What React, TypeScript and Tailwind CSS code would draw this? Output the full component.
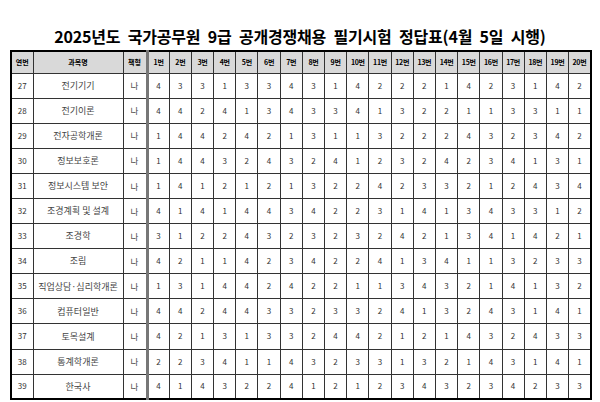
const rows: { no: number; name: string; answers: number[] }[] = [
  { no: 27, name: '전기기기', answers: [4, 3, 3, 1, 3, 3, 4, 3, 1, 4, 2, 2, 2, 1, 4, 2, 3, 1, 4, 2] },
  { no: 28, name: '전기이론', answers: [4, 4, 2, 4, 1, 3, 4, 3, 3, 4, 1, 3, 2, 2, 1, 1, 3, 3, 1, 1] },
  { no: 29, name: '전자공학개론', answers: [1, 4, 4, 2, 4, 2, 1, 3, 1, 1, 3, 2, 2, 2, 4, 3, 2, 3, 4, 2] },
  { no: 30, name: '정보보호론', answers: [1, 4, 4, 3, 2, 4, 3, 2, 4, 1, 2, 3, 2, 4, 2, 3, 4, 1, 3, 1] },
  { no: 31, name: '정보시스템 보안', answers: [1, 4, 1, 2, 1, 2, 1, 3, 2, 2, 4, 2, 3, 3, 2, 1, 2, 4, 3, 4] },
  { no: 32, name: '조경계획 및 설계', answers: [4, 1, 4, 1, 4, 4, 3, 4, 2, 2, 3, 1, 4, 1, 3, 4, 3, 3, 1, 2] },
  { no: 33, name: '조경학', answers: [3, 1, 2, 2, 4, 3, 2, 3, 2, 3, 2, 4, 2, 1, 3, 4, 1, 4, 2, 1] },
  { no: 34, name: '조림', answers: [4, 2, 1, 1, 4, 2, 3, 4, 2, 2, 4, 1, 3, 4, 1, 1, 3, 2, 3, 3] },
  { no: 35, name: '직업상담·심리학개론', answers: [1, 3, 1, 4, 4, 2, 4, 2, 2, 1, 1, 3, 4, 3, 2, 1, 4, 1, 3, 2] },
  { no: 36, name: '컴퓨터일반', answers: [4, 4, 2, 4, 4, 3, 3, 2, 3, 3, 2, 4, 1, 3, 2, 4, 3, 1, 4, 1] },
  { no: 37, name: '토목설계', answers: [4, 2, 1, 3, 1, 3, 3, 2, 4, 4, 2, 1, 2, 1, 4, 3, 2, 4, 3, 3] },
  { no: 38, name: '통계학개론', answers: [2, 2, 3, 4, 1, 1, 4, 3, 2, 3, 3, 1, 3, 2, 1, 4, 3, 1, 4, 1] },
  { no: 39, name: '한국사', answers: [4, 1, 4, 3, 2, 2, 4, 1, 2, 1, 2, 3, 4, 3, 2, 3, 4, 2, 3, 3] },
];

const qs = Array.from({ length: 20 }, (_, i) => i + 1);

export default function App() {
  return (
    <div className="w-[600px] h-[402px] bg-white overflow-hidden pt-[26px] px-[10px] font-['Malgun_Gothic','Noto_Sans_CJK_KR',sans-serif] text-black">
      <h1 className="text-center text-[16px] font-bold leading-[20px] tracking-[-0.2px] [word-spacing:4px] h-[24px]">
        2025년도 국가공무원 9급 공개경쟁채용 필기시험 정답표(4월 5일 시행)
      </h1>
      <table className="table-fixed border-collapse w-[580px] border-2 border-black">
        <colgroup>
          <col className="w-[22px]" />
          <col className="w-[90px]" />
          <col className="w-[24px]" />
          {qs.map((q) => (
            <col key={q} className="w-[22.2px]" />
          ))}
        </colgroup>
        <thead>
          <tr className="h-[22px] bg-[#d9d9d9]">
            <th className="border border-[#333] text-[7px] font-bold p-0">연번</th>
            <th className="border border-[#333] text-[7px] font-bold p-0">과목명</th>
            <th className="border border-[#333] border-r-[3px] border-r-[#777] text-[7px] font-bold p-0">책형</th>
            {qs.map((q) => (
              <th key={q} className="border border-[#333] text-[7px] font-bold p-0 tracking-[-0.3px]">
                {q}번
              </th>
            ))}
          </tr>
        </thead>
        <tbody>
          {rows.map((r) => (
            <tr key={r.no} className="h-[25.1px]">
              <td className="border border-[#333] text-center text-[8px] text-[#333] p-0">{r.no}</td>
              <td className="border border-[#333] text-center text-[9px] text-[#444] p-0 whitespace-nowrap">
                {r.name}
              </td>
              <td className="border border-[#333] border-r-[3px] border-r-[#777] text-center text-[8.5px] text-[#444] p-0">
                나
              </td>
              {r.answers.map((a, i) => (
                <td key={i} className="border border-[#333] text-center text-[8px] text-[#333] p-0">
                  {a}
                </td>
              ))}
            </tr>
          ))}
        </tbody>
      </table>
    </div>
  );
}
